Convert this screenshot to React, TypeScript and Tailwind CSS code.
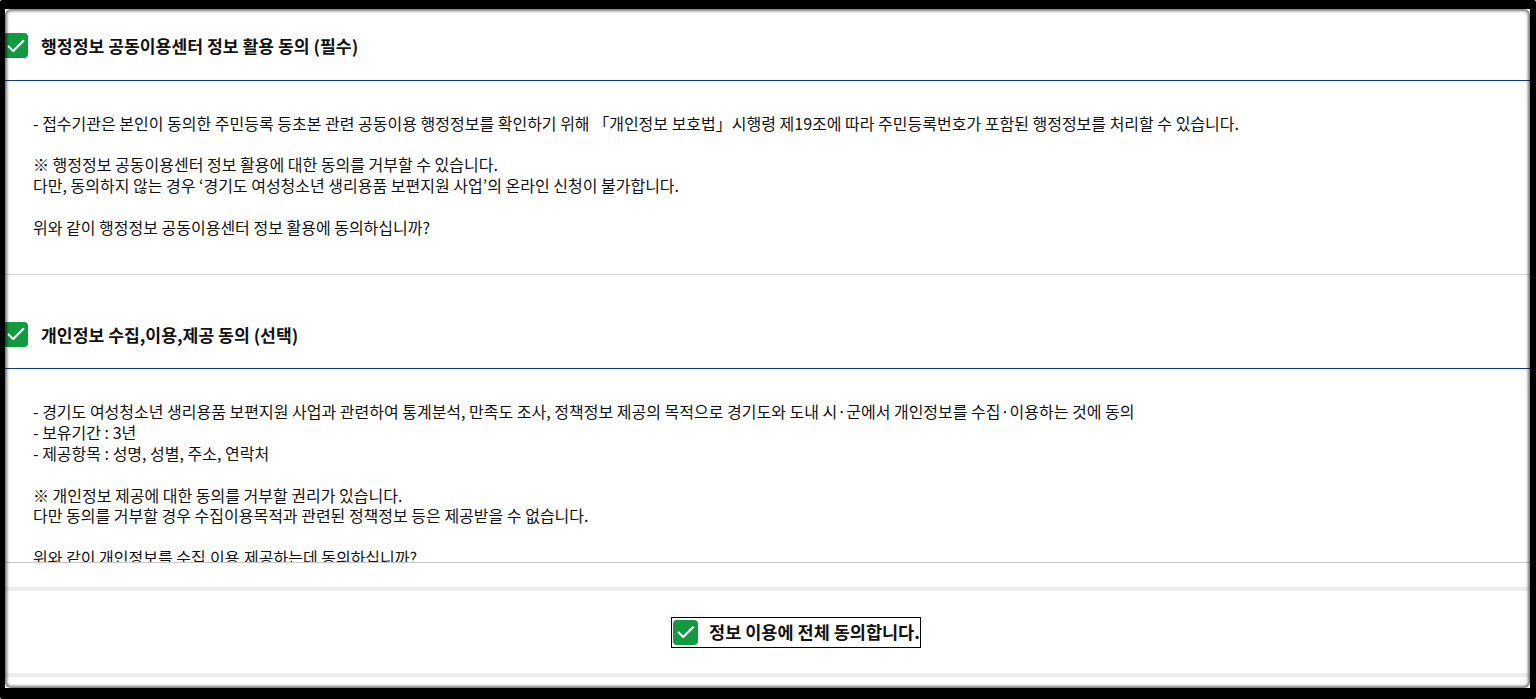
import React from 'react';

const FONT = "font-['Noto_Sans_CJK_KR','Noto_Sans',sans-serif]";

function CheckBox() {
    return (
        <span className="flex h-[25px] w-[25px] shrink-0 items-center justify-center rounded-[4px] bg-[#119a3f]">
            <svg viewBox="0 0 24 24" className="h-[22px] w-[22px]" fill="none" stroke="white" strokeWidth="2.4" strokeLinecap="round" strokeLinejoin="round">
                <path d="M4 12.5l5 5L20 6.5" />
            </svg>
        </span>
    );
}

const text1 = `- 접수기관은 본인이 동의한 주민등록 등초본 관련 공동이용 행정정보를 확인하기 위해 「개인정보 보호법」시행령 제19조에 따라 주민등록번호가 포함된 행정정보를 처리할 수 있습니다.

※ 행정정보 공동이용센터 정보 활용에 대한 동의를 거부할 수 있습니다.
다만, 동의하지 않는 경우 ‘경기도 여성청소년 생리용품 보편지원 사업’의 온라인 신청이 불가합니다.

위와 같이 행정정보 공동이용센터 정보 활용에 동의하십니까?`;

const text2 = `- 경기도 여성청소년 생리용품 보편지원 사업과 관련하여 통계분석, 만족도 조사, 정책정보 제공의 목적으로 경기도와 도내 시·군에서 개인정보를 수집·이용하는 것에 동의
- 보유기간 : 3년
- 제공항목 : 성명, 성별, 주소, 연락처

※ 개인정보 제공에 대한 동의를 거부할 권리가 있습니다.
다만 동의를 거부할 경우 수집이용목적과 관련된 정책정보 등은 제공받을 수 없습니다.

위와 같이 개인정보를 수집.이용.제공하는데 동의하십니까?`;

export default function App() {
    return (
        <div className={`relative h-[699px] w-full overflow-hidden bg-white text-[#111] ${FONT}`}>
            {/* section 1 header */}
            <div className="border-b border-[#0d3a7c] pl-[3px] pt-[33px] pb-[21px]">
                <div className="flex items-center gap-[13px]">
                    <CheckBox />
                    <h2 className="text-[17.2px] font-bold">행정정보 공동이용센터 정보 활용 동의 (필수)</h2>
                </div>
            </div>
            {/* section 1 body */}
            <div className="border-b border-[#d2d2d2] pl-[33px] pt-[32px] pb-[36px]">
                <p className="whitespace-pre-line text-[16px] leading-[20.8px] text-[#111]">{text1}</p>
            </div>

            {/* section 2 header */}
            <div className="border-b border-[#0d3a7c] pl-[3px] pt-[47px] pb-[21px]">
                <div className="flex items-center gap-[13px]">
                    <CheckBox />
                    <h2 className="text-[17.2px] font-bold">개인정보 수집,이용,제공 동의 (선택)</h2>
                </div>
            </div>
            {/* section 2 body, scroll box */}
            <div className="h-[194px] overflow-hidden border-b border-[#c8c8c8] pl-[33px] pt-[32px]">
                <p className="whitespace-pre-line text-[16px] leading-[20.8px] text-[#111]">{text2}</p>
            </div>

            <div className="h-[24px]" />
            <div className="h-[4px] bg-[#ededed]" />
            <div className="flex h-[82px] items-center justify-center pl-[56px]">
                <label className="flex items-center gap-[11px] border border-black py-[2px] pl-[1px]">
                    <CheckBox />
                    <span className="text-[17.5px] font-bold leading-[24px]">정보 이용에 전체 동의합니다.</span>
                </label>
            </div>
            <div className="h-[4px] bg-[#ededed]" />

            {/* dark frame around the capture */}
            <div className="pointer-events-none absolute inset-0 rounded-[2px] border-t-[9px] border-r-[6px] border-b-[11px] border-l-[5px] border-black">
                <div className="h-full w-full rounded-[6px] shadow-[inset_0_0_3px_2px_rgba(0,0,0,0.55)]" />
            </div>
        </div>
    );
}
